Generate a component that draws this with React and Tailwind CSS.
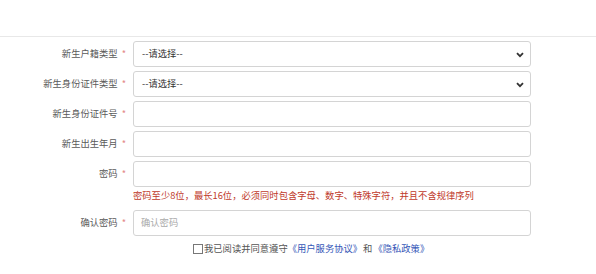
const font = { fontFamily: '"Microsoft YaHei", "Noto Sans CJK SC", sans-serif' }

function Label({ text }) {
  return (
    <div className="w-[133px] shrink-0 pr-[7px] text-right text-[#5a5a5a]">
      {text}
      <span className="ml-[4px] text-[#e48a8a]">*</span>
    </div>
  )
}

function Chevron() {
  return (
    <svg
      className="pointer-events-none absolute right-[6px] top-[10px]"
      width="8"
      height="6"
      viewBox="0 0 8 6"
    >
      <path d="M1 1.2 L4 4.2 L7 1.2" fill="none" stroke="#333" strokeWidth="1.8" />
    </svg>
  )
}

function SelectRow({ label }) {
  return (
    <div className="flex items-center h-[26px]">
      <Label text={label} />
      <div className="relative w-[398px] h-[26px] rounded-[3px] border border-[#d4d4d4] bg-white flex items-center pl-[8px] text-[#333]">
        --请选择--
        <Chevron />
      </div>
    </div>
  )
}

function InputRow({ label, placeholder }) {
  return (
    <div className="flex items-center h-[26px]">
      <Label text={label} />
      <div className="w-[398px] h-[26px] rounded-[3px] border border-[#d4d4d4] bg-white flex items-center pl-[7px] text-[#aaa]">
        {placeholder}
      </div>
    </div>
  )
}

export default function App() {
  return (
    <div className="w-[596px] h-[274px] bg-white text-[9.3px] leading-none" style={font}>
      <div className="h-[36px]" />
      <div className="border-t border-[#e8e8e8] pt-[4px] flex flex-col">
        <SelectRow label="新生户籍类型" />
        <div className="mt-[4px]"><SelectRow label="新生身份证件类型" /></div>
        <div className="mt-[4px]"><InputRow label="新生身份证件号" /></div>
        <div className="mt-[4px]"><InputRow label="新生出生年月" /></div>
        <div className="mt-[4px]"><InputRow label="密码" /></div>
        <div className="h-[23px] pl-[133px] pt-[4px] text-[#c0392b]">
          密码至少8位，最长16位，必须同时包含字母、数字、特殊字符，并且不含规律序列
        </div>
        <InputRow label="确认密码" placeholder="确认密码" />
        <div className="mt-[8px] pl-[193px] flex items-center text-[#555]">
          <span className="inline-block w-[10px] h-[10px] border border-[#777] mr-[1px]" />
          <span>我已阅读并同意遵守</span>
          <span className="text-[#3657b8]">《用户服务协议》</span>
          <span className="mx-[1px]">和</span>
          <span className="text-[#3657b8]">《隐私政策》</span>
        </div>
      </div>
    </div>
  )
}
